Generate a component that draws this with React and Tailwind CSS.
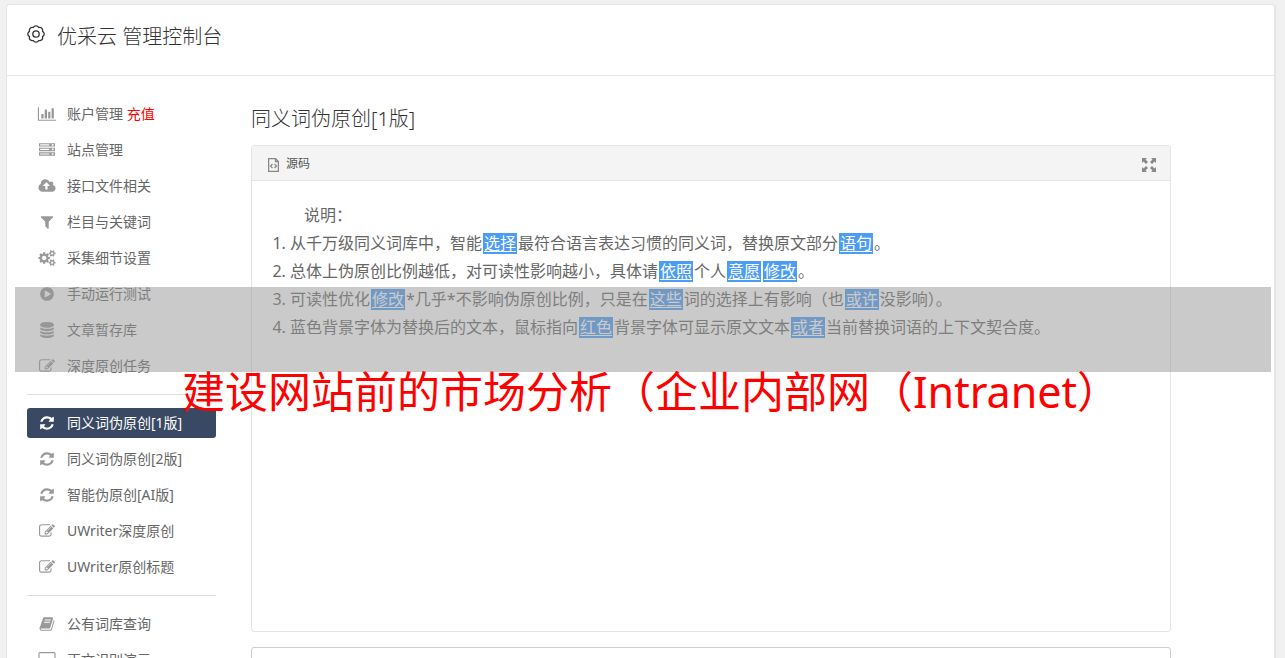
import React from "react";

// icon shapes, drawn on a 1792 high grid
const icons = {
    chart: { w: 2048, d: "M640 896v512h-256v-512h256zm384-512v1024h-256v-1024h256zm1024 1152v128h-2048v-1536h128v1408h1920zm-640-896v768h-256v-768h256zm384-384v1152h-256v-1152h256z" },
    server: { w: 1792, d: "M0 128h1792v384h-1792zM128 1408h1024v-128h-1024zM128 896h1024v-128h-1024zM128 384h1024v-128h-1024zM1440 416h192v-192h-192zM0 640h1792v384h-1792zM1440 928h192v-192h-192zM0 1152h1792v384h-1792zM1440 1440h192v-192h-192z" },
    cloud: { w: 1920, d: "M1280 864q0-14-9-23l-352-352q-9-9-23-9t-23 9l-351 351q-10 12-10 24 0 14 9 23t23 9h224v352q0 13 9.5 22.5t22.5 9.5h192q13 0 22.5-9.5t9.5-22.5v-352h224q13 0 22.5-9.5t9.5-22.5zm640 288q0 159-112.5 271.5t-271.5 112.5h-1088q-185 0-316.5-131.5t-131.5-316.5q0-130 70-240t188-165q-2-30-2-43 0-212 150-362t362-150q156 0 285.5 87t188.5 231q71-62 166-62 106 0 181 75t75 181q0 76-41 138 130 31 213.5 135.5t83.5 238.5z" },
    filter: { w: 1792, d: "M1595 295q17 41-14 70l-493 493v742q0 42-39 59-13 5-25 5-27 0-45-19l-256-256q-19-19-19-45v-486l-493-493q-31-29-14-70 17-39 59-39h1280q42 0 59 39z" },
    cogs: { w: 1920, d: "M896 896q0-106-75-181t-181-75-181 75-75 181 75 181 181 75 181-75 75-181zm768 512q0-52-38-90t-90-38-90 38-38 90q0 53 37.5 90.5t90.5 37.5 90.5-37.5 37.5-90.5zm0-1024q0-52-38-90t-90-38-90 38-38 90q0 53 37.5 90.5t90.5 37.5 90.5-37.5 37.5-90.5zm-384 421v185q0 10-7 19.5t-16 10.5l-155 24q-11 35-32 76 34 48 90 115 7 11 7 20 0 12-7 19-23 30-82.5 89.5t-78.5 59.5q-11 0-21-7l-115-90q-37 19-77 31-11 108-23 155-7 24-30 24h-186q-11 0-20-7.5t-10-17.5l-23-153q-34-10-75-31l-118 89q-7 7-20 7-11 0-21-8-144-133-144-160 0-9 7-19 10-14 41-53t47-61q-23-44-35-82l-152-24q-10-1-17-9.5t-7-19.5v-185q0-10 7-19.5t16-10.5l155-24q11-35 32-76-34-48-90-115-7-11-7-20 0-12 7-20 22-30 82-89t79-59q11 0 21 7l115 90q34-18 77-32 11-108 23-154 7-24 30-24h186q11 0 20 7.5t10 17.5l23 153q34 10 75 31l118-89q8-7 20-7 11 0 21 8 144 133 144 160 0 8-7 19-12 16-42 54t-45 60q23 48 34 82l152 23q10 2 17 10.5t7 19.5zm640 533v140q0 16-149 31-12 27-30 52 51 113 51 138 0 4-4 7-122 71-124 71-8 0-46-47t-52-68q-20 2-30 2t-30-2q-14 21-52 68t-46 47q-2 0-124-71-4-3-4-7 0-25 51-138-18-25-30-52-149-15-149-31v-140q0-16 149-31 13-29 30-52-51-113-51-138 0-4 4-7 4-2 35-20t59-34 30-16q8 0 46 46.5t52 67.5q20-2 30-2t30 2q51-71 92-112l6-2q4 0 124 70 4 3 4 7 0 25-51 138 17 23 30 52 149 15 149 31zm0-1024v140q0 16-149 31-12 27-30 52 51 113 51 138 0 4-4 7-122 71-124 71-8 0-46-47t-52-68q-20 2-30 2t-30-2q-14 21-52 68t-46 47q-2 0-124-71-4-3-4-7 0-25 51-138-18-25-30-52-149-15-149-31v-140q0-16 149-31 13-29 30-52-51-113-51-138 0-4 4-7 4-2 35-20t59-34 30-16q8 0 46 46.5t52 67.5q20-2 30-2t30 2q51-71 92-112l6-2q4 0 124 70 4 3 4 7 0 25-51 138 17 23 30 52 149 15 149 31z" },
    play: { w: 1792, d: "M896 128q209 0 385.5 103t279.5 279.5 103 385.5-103 385.5-279.5 279.5-385.5 103-385.5-103-279.5-279.5-103-385.5 103-385.5 279.5-279.5 385.5-103zm384 823q32-18 32-55t-32-55l-544-320q-31-19-64-1-32 19-32 56v640q0 37 32 56 16 8 32 8 17 0 32-9z" },
    database: { w: 1792, d: "M896 768q237 0 443-43t325-127v170q0 69-103 128t-280 93.5-385 34.5-385-34.5-280-93.5-103-128v-170q119 84 325 127t443 43zm0 768q237 0 443-43t325-127v170q0 69-103 128t-280 93.5-385 34.5-385-34.5-280-93.5-103-128v-170q119 84 325 127t443 43zm0-384q237 0 443-43t325-127v170q0 69-103 128t-280 93.5-385 34.5-385-34.5-280-93.5-103-128v-170q119 84 325 127t443 43zm0-1152q208 0 385 34.5t280 93.5 103 128v128q0 69-103 128t-280 93.5-385 34.5-385-34.5-280-93.5-103-128v-128q0-69 103-128t280-93.5 385-34.5z" },
    edit: { w: 1792, d: "M888 1184l116-116-152-152-116 116v56h96v96h56zm440-720q-16-16-33 1l-350 350q-17 17-1 33t33-1l350-350q17-17 1-33zm80 594v190q0 119-84.5 203.5t-203.5 84.5h-832q-119 0-203.5-84.5t-84.5-203.5v-832q0-119 84.5-203.5t203.5-84.5h832q63 0 117 25 15 7 18 23 3 17-9 29l-49 49q-14 14-32 8-23-6-45-6h-832q-66 0-113 47t-47 113v832q0 66 47 113t113 47h832q66 0 113-47t47-113v-126q0-13 9-22l64-64q15-15 35-7t20 29zm-96-738l288 288-672 672h-288v-288zm444 132l-92 92-288-288 92-92q28-28 68-28t68 28l152 152q28 28 28 68t-28 68z" },
    refresh: { w: 1792, d: "M1639 1056q0 5-1 7-64 268-268 434.5t-478 166.5q-146 0-282.5-55t-243.5-157l-129 129q-19 19-45 19t-45-19-19-45v-448q0-26 19-45t45-19h448q26 0 45 19t19 45-19 45l-137 137q71 66 161 102t187 36q134 0 250-65t186-179q11-17 53-117 8-23 30-23h192q13 0 22.5 9.5t9.5 22.5zm25-800v448q0 26-19 45t-45 19h-448q-26 0-45-19t-19-45 19-45l138-138q-148-137-349-137-134 0-250 65t-186 179q-11 17-53 117-8 23-30 23h-199q-13 0-22.5-9.5t-9.5-22.5v-7q65-268 270-434.5t480-166.5q146 0 284 55.5t245 156.5l130-129q19-19 45-19t45 19 19 45z" },
    book: { w: 1792, d: "M1703 478q40 57 18 129l-275 906q-19 64-76.5 107.5t-122.5 43.5h-923q-77 0-148.5-53.5t-99.5-131.5q-24-67-2-127 0-4 3-27t4-37q1-8-3-21.5t-3-19.5q2-11 8-21t16.5-23.5 16.5-23.5q23-38 45-91.5t30-91.5q3-10 .5-30t-.5-28q3-11 17-28t17-23q21-36 42-92t25-90q1-9-2.5-32t.5-28q4-13 22-30.5t22-22.5q19-26 42.5-84.5t27.5-96.5q1-8-3-25.5t-2-26.5q2-8 9-18t18-23 17-21q8-12 16.5-30.5t15-35 16-36 19.5-32 26.5-23.5 36-11.5 47.5 5.5l-1 3q38-9 51-9h761q74 0 114 56t18 130l-274 906q-36 119-71.5 153.5t-128.5 34.5h-869q-27 0-38 15-11 16-1 43 24 70 144 70h923q29 0 56-15.5t35-41.5l300-987q7-22 5-57 38 15 59 43zm-1064 2q-4 13 2 22.5t20 9.5h608q13 0 25.5-9.5t16.5-22.5l21-64q4-13-2-22.5t-20-9.5h-608q-13 0-25.5 9.5t-16.5 22.5zm-83 256q-4 13 2 22.5t20 9.5h608q13 0 25.5-9.5t16.5-22.5l21-64q4-13-2-22.5t-20-9.5h-608q-13 0-25.5 9.5t-16.5 22.5z" },
    desktop: { w: 1920, d: "M1792 992v-832q0-13-9.500-22.500t-22.500-9.500h-1600q-13 0-22.500 9.500t-9.500 22.500v832q0 13 9.500 22.500t22.500 9.500h1600q13 0 22.500-9.500t9.500-22.500zm128-832v1088q0 66-47 113t-113 47h-544q0 37 16 77.500t32 71 16 43.500q0 26-19 45t-45 19h-512q-26 0-45-19t-19-45q0-14 16-44t32-70 16-78h-544q-66 0-113-47t-47-113v-1088q0-66 47-113t113-47h1600q66 0 113 47t47 113z" },
};

const menu = [
    [
        { icon: "chart", text: "账户管理", extra: "充值" },
        { icon: "server", text: "站点管理" },
        { icon: "cloud", text: "接口文件相关" },
        { icon: "filter", text: "栏目与关键词" },
        { icon: "cogs", text: "采集细节设置" },
        { icon: "play", text: "手动运行测试" },
        { icon: "database", text: "文章暂存库" },
        { icon: "edit", text: "深度原创任务" },
    ],
    [
        { icon: "refresh", text: "同义词伪原创[1版]", active: true },
        { icon: "refresh", text: "同义词伪原创[2版]" },
        { icon: "refresh", text: "智能伪原创[AI版]" },
        { icon: "edit", text: "UWriter深度原创" },
        { icon: "edit", text: "UWriter原创标题" },
    ],
    [
        { icon: "book", text: "公有词库查询" },
        { icon: "desktop", text: "正文识别演示" },
    ],
];

function Icon({ name }) {
    const { w, d } = icons[name];
    return (
        <svg viewBox={`0 0 ${w} 1792`} className="h-4 w-5 shrink-0" fill="currentColor" fillRule="evenodd" aria-hidden="true">
            <path d={d} />
        </svg>
    );
}

function GearIcon() {
    return (
        <svg viewBox="0 0 18 18" className="size-[18px]" fill="none" stroke="currentColor" strokeWidth="1.3" strokeLinejoin="round" aria-hidden="true">
            <path d="M6.300 2.500A3 3 0 0 1 11.700 2.500A3 3 0 0 1 15.500 6.300A3 3 0 0 1 15.500 11.700A3 3 0 0 1 11.700 15.500A3 3 0 0 1 6.300 15.500A3 3 0 0 1 2.500 11.700A3 3 0 0 1 2.500 6.300A3 3 0 0 1 6.300 2.500Z" />
            <circle cx="9" cy="9" r="3.200" />
        </svg>
    );
}

function Sidebar() {
    return (
        <nav className="w-[189px] shrink-0 pt-[23px] text-sm">
            {menu.map((group, i) => (
                <ul key={i} className={i > 0 ? "mt-[13px] flex flex-col gap-1.5 border-t border-[#ddd] pt-[13px]" : "flex flex-col gap-1.5"}>
                    {group.map((item) => (
                        <li key={item.text}>
                            <a
                                href="#"
                                className={item.active
                                    ? "flex h-[30px] items-center gap-2.5 rounded-[3px] bg-[#394963] px-2.5 whitespace-nowrap text-white"
                                    : "flex h-[30px] items-center gap-2.5 px-2.5 whitespace-nowrap text-[#666]"}
                            >
                                <span className={item.active ? "text-white" : "text-[#999]"}>
                                    <Icon name={item.icon} />
                                </span>
                                <span>
                                    {item.text}
                                    {item.extra && <span className="text-[#f00]"> {item.extra}</span>}
                                </span>
                            </a>
                        </li>
                    ))}
                </ul>
            ))}
        </nav>
    );
}

function Word({ children }) {
    return <u className="mx-px inline-block h-[21px] bg-[#4a9cf5] px-px leading-[21px] text-white underline-offset-2">{children}</u>;
}

function Editor() {
    return (
        <div className="rounded-[3px] border border-[#e4e4e4]">
            <div className="flex h-[35px] items-center justify-between border-b border-[#e4e4e4] bg-[#f4f4f4] pr-3.5 pl-4">
                <button type="button" className="flex items-center gap-[7px] pt-0.5 text-xs text-[#555]">
                    <svg viewBox="0 0 11 14" className="mt-0.5 h-3.5 w-[11px]" fill="none" stroke="#888" strokeWidth="1.300" aria-hidden="true">
                        <path d="M.6 .6H7.500L10.400 3.500V13.400H.6Z" />
                        <path d="M7.500 .5V3.500H10.500M4.500 6L2.500 8L4.500 10M6.500 6L8.500 8L6.500 10" />
                    </svg>
                    源码
                </button>
                <button type="button" aria-label="最大化" className="mt-1">
                    <svg viewBox="0 0 14 14" className="size-3.5" fill="#888" aria-hidden="true">
                        <path d="M0 0H5L3.500 1.500L6 4L4 6L1.500 3.500L0 5Z" />
                        <path d="M14 0H9L10.500 1.500L8 4L10 6L12.500 3.500L14 5Z" />
                        <path d="M0 14H5L3.500 12.500L6 10L4 8L1.500 10.500L0 9Z" />
                        <path d="M14 14H9L10.500 12.500L8 10L10 8L12.500 10.500L14 9Z" />
                    </svg>
                </button>
            </div>
            <div className="h-[450px] px-5 pt-5 text-base leading-7 text-[#666]">
                <p className="indent-8">说明：</p>
                <ol className="list-decimal pl-[18px]">
                    <li>从千万级同义词库中，智能<Word>选择</Word>最符合语言表达习惯的同义词，替换原文部分<Word>语句</Word>。</li>
                    <li>总体上伪原创比例越低，对可读性影响越小，具体请<Word>依照</Word>个人<Word>意愿</Word><Word>修改</Word>。</li>
                    <li>可读性优化<Word>修改</Word>*几乎*不影响伪原创比例，只是在<Word>这些</Word>词的选择上有影响（也<Word>或许</Word>没影响）。</li>
                    <li>蓝色背景字体为替换后的文本，鼠标指向<Word>红色</Word>背景字体可显示原文文本<Word>或者</Word>当前替换词语的上下文契合度。</li>
                </ol>
            </div>
        </div>
    );
}

function App() {
    return (
        <div className="relative flex h-screen flex-col overflow-hidden bg-[#f1f1f1] pt-1 pr-[9px] pl-1.5 font-['Noto_Sans','Noto_Sans_CJK_SC',sans-serif]">
            <div className="flex min-h-0 flex-1 flex-col rounded-t border-t border-r-2 border-l border-[#e5e5e5] bg-white">
                <header className="flex h-[71px] shrink-0 items-start gap-3 border-b border-[#e5e5e5] px-5 pt-4 text-[#333]">
                    <span className="pt-1"><GearIcon /></span>
                    <h1 className="text-xl leading-8 font-light">优采云 管理控制台</h1>
                </header>
                <div className="flex min-h-0 flex-1 gap-[35px] px-5">
                    <Sidebar />
                    <main className="w-full max-w-[920px] min-w-0 pt-[27px]">
                        <h2 className="mb-2.5 text-xl leading-8 font-light text-[#333]">同义词伪原创[1版]</h2>
                        <Editor />
                        <textarea aria-label="原文" className="mt-[15px] block h-40 w-full resize-none rounded-[3px] border border-[#ccc] p-2" />
                    </main>
                </div>
            </div>

            {/* banner lying over the console */}
            <div className="pointer-events-none absolute top-[287px] right-3.5 left-[15px] h-[85px] bg-[#969696]/50" />
            <p className="pointer-events-none absolute top-[362px] left-[182px] text-[43px] leading-[60px] whitespace-nowrap text-[#f00]">
                建设网站前的市场分析（企业内部网（Intranet）
            </p>
        </div>
    );
}

export default App;
